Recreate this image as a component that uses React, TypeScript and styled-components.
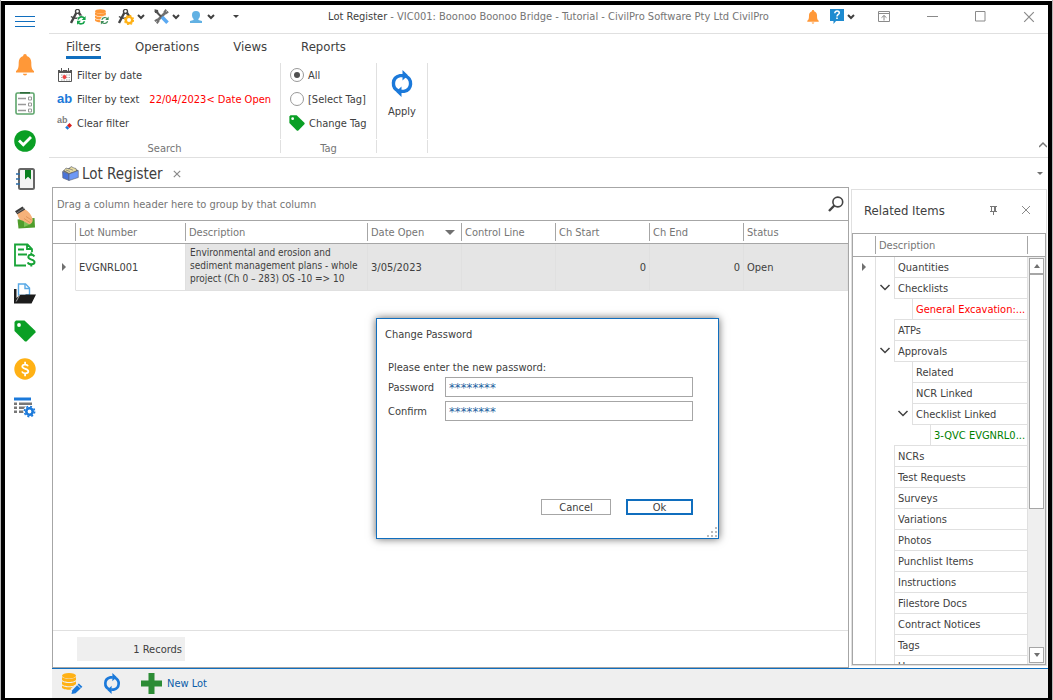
import React from "react";
import styled, { createGlobalStyle } from "styled-components";

const ink = "#404040";
const muted = "#757575";
const line = "#a6a6a6";
const soft = "#e0e0e0";
const blue = "#106ebe";
const green = "#0a9f25";
const amber = "#ffb115";
const orange = "#ff9838";

const GlobalStyle = createGlobalStyle`
  *, *::before, *::after { box-sizing: border-box; }
  body { margin: 0; background: #fff; }
  body, button, input {
    font-family: "DejaVu Sans Condensed", Tahoma, sans-serif;
    font-size: 11px;
    color: ${ink};
  }
  button { background: none; border: 0; padding: 0; }
  svg { display: block; flex: none; }
`;

/* ---------- window frame ---------- */

const Page = styled.div`
  height: 100vh;
  min-height: 560px;
  padding-top: 1px;
  border: solid #b5b5b5;
  border-width: 0 1px;
`;
const Frame = styled.div`
  display: flex;
  height: 100%;
  border: 4px solid #000;
  border-bottom-width: 2px;
  background: #fff;
`;
const Sidebar = styled.nav`
  display: flex;
  flex: none;
  flex-direction: column;
  width: 44px;
  padding-right: 4px;
`;
const SideButton = styled.button<{ $menu?: boolean }>`
  display: grid;
  place-items: center;
  height: ${(p) => (p.$menu ? 32 : 38)}px;
  margin-bottom: ${(p) => (p.$menu ? 9 : 0)}px;
`;
const Main = styled.div`
  display: flex;
  flex: 1;
  flex-direction: column;
  min-width: 0;
`;

/* ---------- title bar ---------- */

const TitleBar = styled.header`
  display: grid;
  grid-template-columns: 1fr auto 1fr;
  align-items: center;
  height: 29px;
  padding-bottom: 5px;
  border-bottom: 1px solid ${soft};
`;
const QuickTools = styled.div`
  display: flex;
  align-items: center;
  gap: 8px;
  padding-left: 21px;
`;
const ToolButton = styled.button`
  display: flex;
  align-items: center;
  gap: 3px;
`;
const ToolIcon = styled.span`
  display: grid;
  place-items: center;
  width: 16px;
  height: 16px;
`;
const CustomiseButton = styled.button`
  display: grid;
  place-items: center;
  width: 26px;
  height: 16px;
`;
const Title = styled.h1`
  margin: 0;
  font-size: 11px;
  font-weight: normal;
  white-space: nowrap;
  color: ${muted};
  strong { font-weight: normal; color: ${ink}; }
`;
const WindowTools = styled.div`
  display: flex;
  align-items: center;
  justify-content: flex-end;
  padding-right: 13px;
`;
const Notices = styled.div`
  display: flex;
  align-items: center;
  gap: 11px;
  margin-right: 23px;
`;
const WindowButtons = styled.div`
  display: flex;
  gap: 37px;
`;

/* ---------- ribbon ---------- */

const Ribbon = styled.section`
  display: flex;
  flex: none;
  flex-direction: column;
  height: 124px;
  border-bottom: 1px solid ${soft};
`;
const RibbonTabs = styled.div`
  display: flex;
  gap: 34px;
  padding-left: 17px;
`;
const RibbonTab = styled.button<{ $active?: boolean }>`
  height: 25px;
  padding-top: 3px;
  font-size: 13px;
  border-bottom: 3px solid ${(p) => (p.$active ? blue : "transparent")};
`;
const RibbonBody = styled.div`
  display: flex;
  flex: 1;
  padding: 4px 0 3px;
`;
const Group = styled.div<{ $width: number }>`
  display: flex;
  flex: none;
  flex-direction: column;
  gap: 1px;
  width: ${(p) => p.$width}px;
`;
const GroupBody = styled.div`
  height: 76px;
  padding-left: 8px;
  border-right: 1px solid ${soft};
`;
const GroupCaption = styled.div`
  height: 13px;
  line-height: 17px;
  text-align: center;
  color: ${muted};
  border-right: 1px solid ${soft};
`;
const RibbonRow = styled.div`
  display: flex;
  align-items: center;
  height: 24px;
  gap: 10px;
  white-space: nowrap;
`;
const RibbonItem = styled.button`
  display: flex;
  align-items: center;
  gap: 4px;
`;
const FilterNote = styled.span`
  color: #f00;
`;
const RadioLabel = styled.label`
  display: flex;
  align-items: center;
  gap: 4px;
  padding-left: 1px;
`;
const Radio = styled.input`
  display: grid;
  place-items: center;
  width: 14px;
  height: 14px;
  margin: 0;
  appearance: none;
  border: 1px solid #999;
  border-radius: 50%;
  &:checked::after {
    content: "";
    width: 6px;
    height: 6px;
    border-radius: 50%;
    background: #505050;
  }
`;
const ApplyBody = styled.div`
  display: flex;
  justify-content: center;
  height: 76px;
  border-right: 1px solid ${soft};
`;
const ApplyButton = styled.button`
  display: flex;
  flex-direction: column;
  align-items: center;
  gap: 8px;
  padding-top: 7px;
`;
const Collapse = styled.button`
  align-self: flex-end;
  margin: 0 1px 5px auto;
`;

/* ---------- workspace ---------- */

const Workspace = styled.main`
  position: relative;
  display: flex;
  flex: 1;
  flex-direction: column;
  min-height: 0;
`;
const DocumentTabs = styled.div`
  display: flex;
  flex: none;
  align-items: center;
  justify-content: space-between;
  height: 29px;
  padding: 2px 5px 0 13px;
`;
const DocumentTab = styled.div`
  display: flex;
  align-items: center;
  gap: 3px;
  font-size: 15px;
`;
const TabClose = styled.button`
  margin-left: 7px;
`;
const Dock = styled.div`
  display: flex;
  flex: 1;
  gap: 2px;
  min-height: 0;
  padding: 0 1px 0 3px;
`;
const GridPanel = styled.section`
  display: flex;
  flex: 1;
  flex-direction: column;
  min-width: 0;
  overflow: hidden;
  border: 1px solid ${line};
`;
const GroupPanel = styled.div`
  display: flex;
  flex: none;
  align-items: center;
  justify-content: space-between;
  height: 33px;
  padding: 0 4px;
  color: ${muted};
  border-bottom: 1px solid ${line};
`;
const LotTable = styled.table`
  width: 100%;
  table-layout: fixed;
  border-spacing: 0;
`;
const HeadCell = styled.th<{ $width?: number }>`
  width: ${(p) => (p.$width ? `${p.$width}px` : "auto")};
  height: 23px;
  padding: 2px 0;
  font-weight: normal;
  text-align: left;
  color: ${muted};
  border-bottom: 1px solid ${line};
`;
const HeadText = styled.div<{ $last?: boolean }>`
  display: flex;
  align-items: center;
  justify-content: space-between;
  height: 18px;
  padding: 0 6px 0 3px;
  white-space: nowrap;
  border-right: ${(p) => (p.$last ? "0" : `1px solid ${line}`)};
`;
const Cell = styled.td<{ $shade?: boolean; $right?: boolean }>`
  height: 47px;
  padding: 0 3px;
  line-height: 13px;
  text-align: ${(p) => (p.$right ? "right" : "left")};
  background: ${(p) => (p.$shade ? "#e5e5e5" : "#fff")};
  border: solid ${soft};
  border-width: 0 1px 1px 0;
`;
const MarkerCell = styled(Cell)`
  padding-left: 9px;
  border-bottom-color: transparent;
`;
const MemoCell = styled(Cell)`
  padding: 0 0 4px 4px;
  font-size: 10px;
  white-space: nowrap;
`;
const GridFooter = styled.div`
  flex: none;
  height: 37px;
  margin-top: auto;
  padding: 6px 24px;
  border-top: 1px solid ${soft};
`;
const RecordCount = styled.div`
  width: 108px;
  height: 24px;
  padding-right: 3px;
  line-height: 25px;
  text-align: right;
  background: #efefef;
`;

/* ---------- related items ---------- */

const RelatedPanel = styled.aside`
  display: flex;
  flex: none;
  flex-direction: column;
  width: 196px;
  margin: 2px 0;
  border: 1px solid ${soft};
`;
const RelatedHead = styled.div`
  display: flex;
  flex: none;
  align-items: center;
  height: 43px;
  padding: 0 15px 3px 12px;
`;
const RelatedTitle = styled.h2`
  flex: 1;
  margin: 0;
  font-size: 13px;
  font-weight: normal;
`;
const PinButton = styled.button`
  margin-right: 24px;
`;
const Tree = styled.div`
  display: flex;
  flex: 1;
  flex-direction: column;
  min-height: 0;
  border: 1px solid ${line};
`;
const TreeHead = styled.div`
  display: flex;
  flex: none;
  height: 23px;
  padding: 2px 17px 2px 22px;
  border-bottom: 1px solid ${line};
`;
const TreeHeadText = styled.div`
  flex: 1;
  padding-left: 3px;
  line-height: 19px;
  color: ${muted};
  border: solid ${line};
  border-width: 0 1px;
`;
const TreeBody = styled.div`
  display: flex;
  flex: 1;
  min-height: 0;
  overflow: hidden;
`;
const Gutter = styled.div`
  width: 23px;
  padding: 6px 0 0 9px;
  border-right: 1px solid ${soft};
`;
const TreeList = styled.ul`
  flex: 1;
  min-width: 0;
  margin: 0;
  padding: 0;
  list-style: none;
`;
const TreeRow = styled.li`
  display: flex;
  height: 21px;
`;
const Step = styled.span<{ $ruled: boolean }>`
  display: grid;
  place-items: center;
  flex: none;
  width: 18px;
  border-bottom: 1px solid ${(p) => (p.$ruled ? soft : "transparent")};
`;
const TreeCell = styled.span<{ $color?: string }>`
  flex: 1;
  min-width: 0;
  padding-left: 3px;
  line-height: 22px;
  white-space: nowrap;
  color: ${(p) => p.$color ?? ink};
  border: solid ${soft};
  border-width: 0 1px 1px;
`;
const ScrollTrack = styled.div`
  display: flex;
  flex-direction: column;
  width: 17px;
  padding: 1px;
  background: #efefef;
`;
const ScrollButton = styled.button`
  display: grid;
  place-items: center;
  height: 16px;
  background: #fff;
  border: 1px solid ${line};
`;
const ScrollThumb = styled.div`
  height: 58%;
  background: #fff;
  border: 1px solid ${line};
`;
const ScrollSpace = styled.div`
  flex: 1;
`;

/* ---------- bottom bar ---------- */

const BottomBar = styled.footer`
  display: flex;
  flex: none;
  align-items: center;
  gap: 20px;
  height: 30px;
  margin-left: 3px;
  padding-left: 10px;
  background: #efefef;
  border-top: 1px solid ${blue};
`;
const BarButton = styled.button`
  display: flex;
  align-items: center;
  gap: 5px;
  color: #0a5ca8;
`;

/* ---------- dialog ---------- */

const Overlay = styled.div`
  position: absolute;
  inset: 0;
  display: grid;
  place-items: center;
  padding: 1px 2px 0 0;
`;
const Dialog = styled.form`
  position: relative;
  display: flex;
  flex-direction: column;
  width: 343px;
  height: 221px;
  padding: 8px 25px 23px 11px;
  background: #fff;
  border: 1px solid ${blue};
  box-shadow: 0 0 8px rgba(0, 0, 0, 0.6);
`;
const DialogTitle = styled.h2`
  margin: 0 0 17px -3px;
  font-size: 11px;
  font-weight: normal;
  line-height: 16px;
`;
const Prompt = styled.p`
  margin: 0 0 1px;
  line-height: 16px;
`;
const Field = styled.div`
  display: grid;
  grid-template-columns: 57px 1fr;
  height: 20px;
  margin-bottom: 4px;
  line-height: 22px;
`;
const PasswordInput = styled.input`
  width: 100%;
  height: 20px;
  padding: 0 3px;
  font-size: 13px;
  color: #1d5f9e;
  background: #fff;
  border: 1px solid ${line};
  border-radius: 0;
  outline: 0;
`;
const Actions = styled.div`
  display: flex;
  justify-content: flex-end;
  gap: 15px;
  margin-top: auto;
`;
const DialogButton = styled.button<{ $primary?: boolean }>`
  width: ${(p) => (p.$primary ? 67 : 70)}px;
  height: 16px;
  padding-top: 1px;
  line-height: 12px;
  background: #fff;
  border: ${(p) => (p.$primary ? `2px solid ${blue}` : `1px solid ${line}`)};
`;
const Grip = styled.svg`
  position: absolute;
  right: 0;
  bottom: 0;
`;

/* ---------- icons ---------- */

const Chevron = ({ up = false, size = 8, color = ink, width = 2 }) => (
  <svg width={size} height={size} viewBox="0 0 8 8" fill="none" stroke={color} strokeWidth={width}>
    <path d={up ? "M0 6l4-4 4 4" : "M1 2l3 3 3-3"} />
  </svg>
);
const Triangle = ({ dir = "down", w = 6, h = 3, color = "#707070" }) => {
  const d = dir === "down" ? `M0 0h${w}L${w / 2} ${h}z` : dir === "up" ? `M0 ${h}h${w}L${w / 2} 0z` : `M0 0v${h}L${w} ${h / 2}z`;
  return (
    <svg width={w} height={h} viewBox={`0 0 ${w} ${h}`}>
      <path d={d} fill={color} />
    </svg>
  );
};
const Cross = ({ size = 10, width = 1, color = "#8a8a8a" }) => (
  <svg width={size} height={size} viewBox="0 0 10 10" stroke={color} strokeWidth={width}>
    <path d="M1 1l8 8M9 1l-8 8" />
  </svg>
);
const Bell = ({ w = 18, h = 22 }) => (
  <svg width={w} height={h} viewBox="0 0 18 22" fill={orange}>
    <path d="M9 0c1.200 0 1.800.8 1.800 1.900C14 3 15.300 5.500 15.300 8.500c0 5 .5 7 2.700 8.500v1.500H0V17c2.200-1.500 2.700-3.500 2.700-8.500 0-3 1.300-5.500 4.500-6.600C7.200.8 7.800 0 9 0zM7 19.800h4c0 1-.8 1.700-2 1.700s-2-.7-2-1.700z" />
  </svg>
);
const Tag = ({ size = 22 }) => (
  <svg width={size} height={size} viewBox="0 0 22 22">
    <path d="M2 .5h8.500L21.500 11v1.500L12.500 21.500H11L.5 11V2z" fill={green} />
    <circle cx="5" cy="5" r="1.900" fill="#fff" />
  </svg>
);
const Sync = ({ w = 22, h = 27 }) => (
  <svg width={w} height={h} viewBox="0 0 22 27" fill="none" stroke="#1b79da" strokeWidth="3.400">
    <path d="M7.500 21C.5 18 .5 7.500 9 5.600h3M14.500 6C21.500 9 21.500 19.500 13 21.400h-3" />
    <path d="M11.500 0v10.500L17 5.300zM10.500 16.500V27L5 21.700z" fill="#1b79da" stroke="none" />
  </svg>
);
const Compass = ({ badge }: { badge: "sync" | "gear" }) => (
  <svg width="16" height="16" viewBox="0 0 16 16" fill="none">
    <path d="M7 2.500L1 14M8 2.500l4 6" stroke="#444" strokeWidth="2.400" />
    <path d="M1 7.500c3 2.500 8 2.500 11-.5" stroke="#444" strokeWidth="1.500" />
    <circle cx="7.500" cy="2.400" r="2" fill="#fff" stroke="#444" strokeWidth="1.400" />
    {badge === "sync" ? (
      <>
        <circle cx="11.300" cy="11.300" r="4.700" fill="#fff" />
        <path d="M14.500 9.500a3.600 3.600 0 0 0-6.500 1M8 13.200a3.600 3.600 0 0 0 6.500-1" stroke="#16a34a" strokeWidth="1.600" />
        <path d="M15.600 7v4h-4zM7 15.700v-4h4z" fill="#16a34a" />
      </>
    ) : (
      <>
        <circle cx="11" cy="11" r="3.200" stroke={amber} strokeWidth="2.400" fill="#fff" />
        <circle cx="11" cy="11" r="4.600" stroke={amber} strokeWidth="1.200" strokeDasharray="1.800 1.812" />
      </>
    )}
  </svg>
);
const Stack = ({ color }: { color: string }) => (
  <g fill={color}>
    <ellipse cx="7" cy="2.800" rx="7" ry="2.800" />
    <path d="M0 4c2 2.400 12 2.400 14 0v2.700c-1 3-13 3-14 0zM0 8.200c2 2.400 12 2.400 14 0v2.700c-1 3-13 3-14 0zM0 12.400c2 2.400 12 2.400 14 0v2c-1 3-13 3-14 0z" />
  </g>
);
const DbSync = () => (
  <svg width="14" height="16" viewBox="0 0 18 20">
    <Stack color={orange} />
    <circle cx="12.500" cy="14.500" r="5.800" fill="#fff" />
    <path d="M16 12.500a4 4 0 0 0-7.200 1M9 16.500a4 4 0 0 0 7.200-1" stroke="#3c8d5a" strokeWidth="1.600" fill="none" />
    <path d="M17.500 9.500v4.300h-4.300zM7.600 19.600v-4.300h4.300z" fill="#3c8d5a" />
  </svg>
);
const DbEdit = () => (
  <svg width="21" height="22" viewBox="0 0 21 22">
    <Stack color={amber} />
    <path d="M8 21.500l1-6 7-6 5 4.500-8 7.500z" fill="#efefef" />
    <path d="M9.500 21l.8-3.800 6.500-6.700 3.600 3.200-6.800 6.600z" fill="#1b79da" />
    <path d="M15 11.600l3.600 3.400" stroke="#efefef" />
  </svg>
);
const Tools = () => (
  <svg width="15" height="15" viewBox="0 0 15 15" fill="none">
    <path d="M11.500 3.500L3 12" stroke="#707070" strokeWidth="2.600" />
    <path d="M14.200 2.600L12 4.200 10.600 2.800 12.200.7M.8 12.200L3 10.800l1.400 1.400-1.600 2.200" stroke="#707070" strokeWidth="2" />
    <path d="M1 1.500l6 6" stroke="#505050" strokeWidth="2" />
    <path d="M.5.300L4 1l.5 3L1 4z" fill="#505050" />
    <path d="M8 8l5.500 5.700" stroke="#5aa9f2" strokeWidth="3.600" />
  </svg>
);
const Person = () => (
  <svg width="12" height="12" viewBox="0 0 12 12" fill="#62b1e3">
    <path d="M6 0c2.800 0 4 1.600 4 4 0 2-.8 3.200-1.600 4v1L12 10v2H0v-2l3.600-1V8C2.800 7.200 2 6 2 4c0-2.400 1.200-4 4-4z" />
  </svg>
);
const Help = () => (
  <svg width="14" height="15" viewBox="0 0 14 15">
    <path d="M0 0h14v12H6l-2.500 3v-3H0z" fill="#1e8bd0" />
    <path d="M4.800 4.200c0-3 4.500-2.600 4.500-.2C9.300 5.500 7 5.500 7 7.500" stroke="#fff" strokeWidth="1.500" fill="none" />
    <path d="M6.200 8.600h1.600v1.500H6.200z" fill="#fff" />
  </svg>
);
const RibbonMode = () => (
  <svg width="12" height="11" viewBox="0 0 12 11" fill="none" stroke="#8a8a8a">
    <path d="M.5.500h11v10H.5zM.5 2.500h11M6 9.500v-5M3.500 6.700L6 4.500l2.500 2.200" />
  </svg>
);
const Minimize = () => (
  <svg width="11" height="11" viewBox="0 0 11 11" stroke="#8a8a8a">
    <path d="M0 5.500h11" />
  </svg>
);
const Maximize = () => (
  <svg width="11" height="11" viewBox="0 0 11 11" stroke="#8a8a8a" fill="none">
    <path d="M.5.500h9.500v9.500H.5z" />
  </svg>
);
const MenuLines = () => (
  <svg width="20" height="11" viewBox="0 0 20 11" stroke={blue}>
    <path d="M0 .5h20M0 5.500h20M0 10.500h20" />
  </svg>
);
const Checklist = () => (
  <svg width="20" height="23" viewBox="0 0 20 23" fill="none">
    <rect x="1" y="1" width="18" height="21" rx="1.500" stroke="#5da56b" strokeWidth="1.600" />
    <path d="M5 .8h10" stroke="#2f6b3b" strokeWidth="1.600" />
    <path d="M3 6.500h8M3 12.500h8M3 18.500h8" stroke="#999" strokeWidth="1.300" />
    <path d="M13.500 5h3v3h-3zM13.500 11h3v3h-3zM13.500 17h3v3h-3z" stroke="#999" />
  </svg>
);
const CheckDisc = () => (
  <svg width="22" height="22" viewBox="0 0 22 22">
    <circle cx="11" cy="11" r="10.800" fill={green} />
    <path d="M5 10.500l4.300 4.300L17 7" stroke="#fff" strokeWidth="2.800" fill="none" />
  </svg>
);
const Notebook = () => (
  <svg width="19" height="22" viewBox="0 0 19 22" fill="none">
    <rect x="3" y="1" width="15" height="20" rx="1.500" fill="#f4f4f4" stroke="#666" strokeWidth="2" />
    <path d="M9 2h6v9.500l-3-2.800-3 2.800z" fill="#0a7f20" />
    <path d="M0 6h4M0 11h4M0 16h4" stroke="#2b6ca8" strokeWidth="1.600" />
  </svg>
);
const PayHand = () => (
  <svg width="20" height="23" viewBox="0 0 20 23">
    <path d="M2.500 13.500l17-1.500.5 9.500-16.500 1z" fill="#4f9d2c" />
    <path d="M9 14l7 4-7 3z" fill="#7cc257" />
    <path d="M2 7.500l7.500-4.300c4 1.500 7.500 6.500 8.200 10.300.2 2.800-1.500 5-4 4.600l-6.500-3.600C4.700 14.500 3 11 2 7.500z" fill="#f6b27a" />
    <path d="M9 12.500l6 4M11 10.500l5.500 3.500" stroke="#d98d52" strokeWidth=".8" />
    <path d="M0 5.200L7.500.5l2.700 3L2.300 8.300z" fill="#3a3a3a" />
    <path d="M1.800 6.900l7.500-4.700" stroke="#999" strokeWidth=".7" />
  </svg>
);
const Invoice = () => (
  <svg width="22" height="24" viewBox="0 0 22 24" fill="none" stroke="#18a337" strokeWidth="1.800">
    <path d="M12 22.500H1v-21h12.500l4.500 4.500v3M13 1.500V6h5M4 6.500h6M4 11.500h9" />
    <path d="M20.300 13.500c-1-2.300-6-2.300-6 .6 0 3.200 6.200 1.800 6.200 4.900 0 3-5.700 3-6.700.3M17.300 9.500v2.500M17.300 21v2.500" strokeWidth="2" />
  </svg>
);
const Folder = () => (
  <svg width="22" height="21" viewBox="0 0 22 21">
    <path d="M4.500 1h7l4 4v7h-11z" fill="#fff" stroke="#58a9e6" strokeWidth="1.400" />
    <path d="M11 1v4.500h4.500" fill="none" stroke="#58a9e6" strokeWidth="1.400" />
    <path d="M0 6h2.500v9L6 11.500h16L17.500 20.500H0z" fill="#1c1c1c" />
    <path d="M2.200 18.500L6 11.300h5.500" fill="none" stroke="#fff" strokeWidth=".6" />
  </svg>
);
const Coin = () => (
  <svg width="22" height="22" viewBox="0 0 22 22" fill="none">
    <circle cx="11" cy="11" r="10.700" fill={amber} />
    <path d="M14 8.200c-.8-2.200-5.700-2.200-5.700.4 0 2.800 6 1.700 6 4.700 0 2.700-5.400 2.700-6.400.2M11.100 3.800v2.500M11.100 15.500v2.700" stroke="#fff" strokeWidth="1.800" />
  </svg>
);
const ListGear = () => (
  <svg width="22" height="21" viewBox="0 0 22 21">
    <path d="M0 .5h17v3H0z" fill="#1b79da" />
    <path d="M0 5.500h3V8H0zM5 5.500h13V8H5zM0 9.500h3V12H0zM5 9.500h7V12H5zM0 13.500h3V16H0zM5 13.500h5V16H5z" fill="#777" />
    <circle cx="15.500" cy="14.500" r="6.300" fill="#fff" />
    <circle cx="15.500" cy="14.500" r="3.200" fill="none" stroke="#1b79da" strokeWidth="2.600" />
    <circle cx="15.500" cy="14.500" r="5.100" fill="none" stroke="#1b79da" strokeWidth="1.600" strokeDasharray="2 2.005" />
  </svg>
);
const Calendar = () => (
  <svg width="16" height="14" viewBox="0 0 16 14" fill="none">
    <path d="M1.500 2v11.500h13V2" stroke="#555" />
    <path d="M1 2h14v3H1z" fill="#555" />
    <path d="M4.500 0v3M11.500 0v3" stroke="#fff" strokeWidth="2.600" />
    <path d="M4.500 0v3M11.500 0v3" stroke="#555" />
    <path d="M4 7h9M4 9.500h9M4 12h9" stroke="#aaa" strokeDasharray="1.500 1" />
    <circle cx="7.500" cy="9" r="2" fill="#ef4444" />
  </svg>
);
const AbWord = styled.b<{ $small?: boolean }>`
  width: 16px;
  font-family: "Liberation Sans", Arial, sans-serif;
  font-size: ${(p) => (p.$small ? 9 : 13)}px;
  line-height: 14px;
  text-align: left;
  color: ${(p) => (p.$small ? "#808080" : "#1b79da")};
`;
const ClearMark = styled.span`
  position: relative;
  width: 16px;
  height: 14px;
  text-align: left;
  svg { position: absolute; right: 1px; bottom: 0; }
  b { position: absolute; left: 0; top: -3px; width: auto; }
`;
const Eraser = () => (
  <svg width="7" height="7" viewBox="0 0 7 7">
    <path d="M4.500 0L7 2.500 4.500 5 2 2.500z" fill="#d62222" />
    <path d="M2 2.800L4.200 5 2.500 6.800.2 4.500z" fill="#1b79da" />
  </svg>
);
const LotBox = () => (
  <svg width="17" height="16" viewBox="0 0 17 16" stroke="#5c6170" strokeWidth=".6">
    <path d="M1 5l8-3.500L16 4.500 7 8z" fill="#6c6238" />
    <path d="M2 4.500l2-2.500 3 1 2-2.500L12 2l2 .5.5 2.500L7 7.500z" fill="#e8dca0" />
    <path d="M4 4l4 1.500M7 2.700l4 1.500" />
    <path d="M.5 5.500L7 8v6.500L.8 12z" fill="#4a74d8" />
    <path d="M7 8l9.300-3.500v7L7 14.500z" fill="#6d98f5" />
  </svg>
);
const Search = () => (
  <svg width="16" height="16" viewBox="0 0 16 16" fill="none" stroke="#444">
    <circle cx="9.800" cy="6" r="4.900" strokeWidth="1.600" />
    <path d="M6.300 9.500L1 15" strokeWidth="2.400" />
  </svg>
);
const Pin = () => (
  <svg width="7" height="9" viewBox="0 0 7 9" fill="none" stroke="#777">
    <path d="M0 .5h7M1.500 1v4M5.500 1v4M4.500 1v4M0 5.500h7M3.500 5.500V9" />
  </svg>
);
const Plus = () => (
  <svg width="21" height="21" viewBox="0 0 21 21">
    <path d="M7.500 0h6v7.500H21v6h-7.500V21h-6v-7.500H0v-6h7.500z" fill="#2c8c35" />
  </svg>
);

/* ---------- data ---------- */

const sideItems: [string, React.ReactNode][] = [
  ["Notifications", <Bell />],
  ["Checklists", <Checklist />],
  ["Approvals", <CheckDisc />],
  ["Diary", <Notebook />],
  ["Payments", <PayHand />],
  ["Claims", <Invoice />],
  ["Filestore", <Folder />],
  ["Tags", <Tag />],
  ["Costs", <Coin />],
  ["Settings", <ListGear />],
];

const columns: { name: string; width?: number; sorted?: boolean }[] = [
  { name: "Lot Number", width: 110 },
  { name: "Description", width: 182 },
  { name: "Date Open", width: 94, sorted: true },
  { name: "Control Line", width: 94 },
  { name: "Ch Start", width: 94 },
  { name: "Ch End", width: 94 },
  { name: "Status" },
];

type Node = { text: string; level: number; open?: boolean; color?: string };
const related: Node[] = [
  { text: "Quantities", level: 0 },
  { text: "Checklists", level: 0, open: true },
  { text: "General Excavation:...", level: 1, color: "#f00" },
  { text: "ATPs", level: 0 },
  { text: "Approvals", level: 0, open: true },
  { text: "Related", level: 1 },
  { text: "NCR Linked", level: 1 },
  { text: "Checklist Linked", level: 1, open: true },
  { text: "3-QVC EVGNRL0...", level: 2, color: "#008000" },
  ...["NCRs", "Test Requests", "Surveys", "Variations", "Photos", "Punchlist Items", "Instructions", "Filestore Docs", "Contract Notices", "Tags", "Users"].map((text) => ({ text, level: 0 })),
];

const RelatedTree = () => (
  <TreeList>
    {related.map((node, i) => {
      const next = related[i + 1]?.level ?? 0;
      return (
        <TreeRow key={node.text}>
          {Array.from({ length: node.level + 1 }, (_, step) => (
            <Step key={step} $ruled={step > next}>
              {node.open && step === node.level && <Chevron size={12} width={1} />}
            </Step>
          ))}
          <TreeCell $color={node.color}>{node.text}</TreeCell>
        </TreeRow>
      );
    })}
  </TreeList>
);

export default function App() {
  return (
    <Page>
      <GlobalStyle />
      <Frame>
        <Sidebar aria-label="Registers">
          <SideButton $menu aria-label="Menu">
            <MenuLines />
          </SideButton>
          {sideItems.map(([name, icon]) => (
            <SideButton key={name} aria-label={name}>
              {icon}
            </SideButton>
          ))}
        </Sidebar>
        <Main>
          <TitleBar>
            <QuickTools>
              <ToolButton aria-label="Refresh project"><ToolIcon><Compass badge="sync" /></ToolIcon></ToolButton>
              <ToolButton aria-label="Refresh data"><ToolIcon><DbSync /></ToolIcon></ToolButton>
              <ToolButton aria-label="Project setup"><ToolIcon><Compass badge="gear" /></ToolIcon><Chevron /></ToolButton>
              <ToolButton aria-label="Tools"><ToolIcon><Tools /></ToolIcon><Chevron /></ToolButton>
              <ToolButton aria-label="User"><ToolIcon><Person /></ToolIcon><Chevron /></ToolButton>
              <CustomiseButton aria-label="Customise"><Triangle color={ink} /></CustomiseButton>
            </QuickTools>
            <Title>
              <strong>Lot Register</strong> - VIC001: Boonoo Boonoo Bridge - Tutorial - CivilPro Software Pty Ltd CivilPro
            </Title>
            <WindowTools>
              <Notices>
                <ToolButton aria-label="Alerts"><Bell w={12} h={14} /></ToolButton>
                <ToolButton aria-label="Help"><Help /><Chevron /></ToolButton>
              </Notices>
              <WindowButtons>
                <ToolButton aria-label="Ribbon display"><RibbonMode /></ToolButton>
                <ToolButton aria-label="Minimize"><Minimize /></ToolButton>
                <ToolButton aria-label="Maximize"><Maximize /></ToolButton>
                <ToolButton aria-label="Close"><Cross size={12} /></ToolButton>
              </WindowButtons>
            </WindowTools>
          </TitleBar>

          <Ribbon>
            <RibbonTabs>
              <RibbonTab $active>Filters</RibbonTab>
              <RibbonTab>Operations</RibbonTab>
              <RibbonTab>Views</RibbonTab>
              <RibbonTab>Reports</RibbonTab>
            </RibbonTabs>
            <RibbonBody>
              <Group $width={232}>
                <GroupBody>
                  <RibbonRow><RibbonItem><Calendar />Filter by date</RibbonItem></RibbonRow>
                  <RibbonRow>
                    <RibbonItem><AbWord>ab</AbWord>Filter by text</RibbonItem>
                    <FilterNote>22/04/2023&lt; Date Open</FilterNote>
                  </RibbonRow>
                  <RibbonRow>
                    <RibbonItem>
                      <ClearMark><AbWord $small>ab</AbWord><Eraser /></ClearMark>
                      Clear filter
                    </RibbonItem>
                  </RibbonRow>
                </GroupBody>
                <GroupCaption>Search</GroupCaption>
              </Group>
              <Group $width={96}>
                <GroupBody>
                  <RibbonRow><RadioLabel><Radio type="radio" name="tag" defaultChecked />All</RadioLabel></RibbonRow>
                  <RibbonRow><RadioLabel><Radio type="radio" name="tag" />[Select Tag]</RadioLabel></RibbonRow>
                  <RibbonRow><RibbonItem><Tag size={16} />Change Tag</RibbonItem></RibbonRow>
                </GroupBody>
                <GroupCaption>Tag</GroupCaption>
              </Group>
              <Group $width={51}>
                <ApplyBody>
                  <ApplyButton><Sync />Apply</ApplyButton>
                </ApplyBody>
                <GroupCaption />
              </Group>
              <Collapse aria-label="Collapse ribbon"><Chevron up width={1.5} color="#777" /></Collapse>
            </RibbonBody>
          </Ribbon>

          <Workspace>
            <DocumentTabs>
              <DocumentTab>
                <LotBox />
                Lot Register
                <TabClose aria-label="Close tab"><Cross size={8} width={1.5} /></TabClose>
              </DocumentTab>
              <ToolButton aria-label="Open documents"><Triangle /></ToolButton>
            </DocumentTabs>
            <Dock>
              <GridPanel>
                <GroupPanel>
                  Drag a column header here to group by that column
                  <ToolButton aria-label="Search"><Search /></ToolButton>
                </GroupPanel>
                <LotTable>
                  <thead>
                    <tr>
                      <HeadCell $width={23} aria-label="Row marker"><HeadText /></HeadCell>
                      {columns.map((column) => (
                        <HeadCell key={column.name} $width={column.width}>
                          <HeadText $last={!column.width}>
                            {column.name}
                            {column.sorted && <Triangle w={10} h={5} />}
                          </HeadText>
                        </HeadCell>
                      ))}
                    </tr>
                  </thead>
                  <tbody>
                    <tr>
                      <MarkerCell><Triangle dir="right" w={4} h={8} /></MarkerCell>
                      <Cell>EVGNRL001</Cell>
                      <MemoCell $shade>
                        Environmental and erosion and<br />sediment management plans - whole<br />project (Ch 0 – 283) OS -10 =&gt; 10
                      </MemoCell>
                      <Cell $shade>3/05/2023</Cell>
                      <Cell $shade />
                      <Cell $shade $right>0</Cell>
                      <Cell $shade $right>0</Cell>
                      <Cell $shade>Open</Cell>
                    </tr>
                  </tbody>
                </LotTable>
                <GridFooter><RecordCount>1 Records</RecordCount></GridFooter>
              </GridPanel>

              <RelatedPanel>
                <RelatedHead>
                  <RelatedTitle>Related Items</RelatedTitle>
                  <PinButton aria-label="Pin"><Pin /></PinButton>
                  <ToolButton aria-label="Close panel"><Cross /></ToolButton>
                </RelatedHead>
                <Tree>
                  <TreeHead><TreeHeadText>Description</TreeHeadText></TreeHead>
                  <TreeBody>
                    <Gutter><Triangle dir="right" w={4} h={8} /></Gutter>
                    <RelatedTree />
                    <ScrollTrack>
                      <ScrollButton aria-label="Scroll up"><Triangle dir="up" w={6} h={4} /></ScrollButton>
                      <ScrollThumb />
                      <ScrollSpace />
                      <ScrollButton aria-label="Scroll down"><Triangle w={6} h={4} /></ScrollButton>
                    </ScrollTrack>
                  </TreeBody>
                </Tree>
              </RelatedPanel>
            </Dock>
            <BottomBar>
              <BarButton aria-label="Edit data"><DbEdit /></BarButton>
              <BarButton aria-label="Refresh"><Sync w={18} h={21} /></BarButton>
              <BarButton><Plus />New Lot</BarButton>
            </BottomBar>

            <Overlay>
              <Dialog role="dialog" aria-labelledby="dialog-title" onSubmit={(e) => e.preventDefault()}>
                <DialogTitle id="dialog-title">Change Password</DialogTitle>
                <Prompt>Please enter the new password:</Prompt>
                <Field>
                  <label htmlFor="password">Password</label>
                  <PasswordInput id="password" type="text" autoComplete="off" defaultValue="********" />
                </Field>
                <Field>
                  <label htmlFor="confirm">Confirm</label>
                  <PasswordInput id="confirm" type="text" autoComplete="off" defaultValue="********" />
                </Field>
                <Actions>
                  <DialogButton type="button">Cancel</DialogButton>
                  <DialogButton $primary type="submit">Ok</DialogButton>
                </Actions>
                <Grip width="11" height="11" viewBox="0 0 11 11" fill="#bbb">
                  <path d="M8 0h2v2H8zM4 4h2v2H4zM8 4h2v2H8zM0 8h2v2H0zM4 8h2v2H4zM8 8h2v2H8z" />
                </Grip>
              </Dialog>
            </Overlay>
          </Workspace>
        </Main>
      </Frame>
    </Page>
  );
}
